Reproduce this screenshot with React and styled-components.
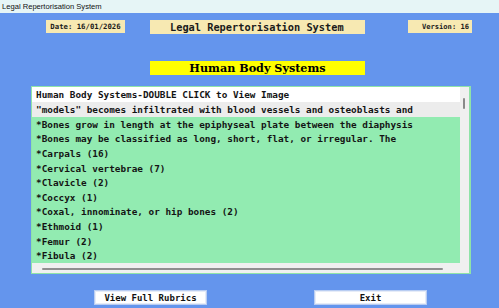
import styled, { createGlobalStyle } from "styled-components"

const GlobalStyle = createGlobalStyle`
    html, body {
        margin: 0;
        padding: 0;
        background: #6495ed;
    }
`

const Window = styled.div`
    width: 499px;
    height: 308px;
    background-color: #6495ed;
    display: flex;
    flex-direction: column;
    overflow: hidden;
`

const TitleBar = styled.div`
    height: 13px;
    background-color: #e6f5f6;
    display: flex;
    align-items: center;
    padding-left: 2px;
    font-family: "Liberation Sans", "Noto Sans", sans-serif;
    font-size: 7.6px;
    color: #111;
`

const TopRow = styled.div`
    display: flex;
    align-items: flex-start;
    margin-top: 7px;
    height: 14px;
`

const InfoBox = styled.div`
    margin-left: ${(p) => p.$left}px;
    width: ${(p) => p.$width}px;
    height: ${(p) => p.$height || 13}px;
    background-color: #f7e9b2;
    display: flex;
    align-items: center;
    justify-content: ${(p) => (p.$center ? "center" : "flex-start")};
    padding-left: ${(p) => p.$pad || 0}px;
    box-sizing: border-box;
    font-family: "DejaVu Sans Mono", "Liberation Mono", monospace;
    font-weight: bold;
    font-size: ${(p) => p.$size}px;
    color: #1a1a1a;
    white-space: nowrap;
`

const Heading = styled.div`
    margin-left: 150px;
    margin-top: 27px;
    width: 215px;
    height: 14px;
    background-color: #ffff00;
    display: flex;
    align-items: center;
    justify-content: center;
    font-family: "DejaVu Serif", "Liberation Serif", serif;
    font-weight: 900;
    font-size: 11.2px;
    color: #000;
`

const ListBox = styled.div`
    margin-left: 31px;
    margin-top: 11px;
    width: 440px;
    height: 188px;
    box-sizing: border-box;
    border: 1px solid #8fe3a8;
    border-right-width: 2px;
    background-color: #f0f0f0;
    display: grid;
    grid-template-columns: 1fr 9px;
    grid-template-rows: 1fr 10px;
`

const Rows = styled.div`
    display: flex;
    flex-direction: column;
    background-color: #92ebb1;
    overflow: hidden;
`

const Row = styled.div`
    height: ${(p) => p.$h}px;
    flex-shrink: 0;
    display: flex;
    align-items: center;
    padding-left: 4px;
    background-color: ${(p) => p.$bg || "transparent"};
    font-family: "DejaVu Sans Mono", "Liberation Mono", monospace;
    font-weight: bold;
    font-size: 9.35px;
    color: #141414;
    white-space: nowrap;
`

const VScroll = styled.div`
    background-color: #f0f0f0;
    position: relative;
    .thumb {
        position: absolute;
        left: 3px;
        top: 11px;
        width: 2px;
        height: 11px;
        border-radius: 1px;
        background-color: #8a8a8a;
    }
`

const HScroll = styled.div`
    background-color: #f0f0f0;
    display: flex;
    align-items: flex-end;
    padding: 0 0 3px 10px;
    .thumb {
        width: 401px;
        height: 2px;
        border-radius: 1px;
        background-color: #8f8f8f;
    }
`

const Corner = styled.div`
    background-color: #f0f0f0;
`

const ButtonRow = styled.div`
    display: flex;
    margin-top: 16px;
`

const Button = styled.button`
    margin-left: ${(p) => p.$left}px;
    width: 113px;
    height: 15px;
    padding: 0;
    background-color: #ffffff;
    border: 1px solid #b9cdf2;
    box-shadow: inset 0 0 0 1px #e6ecf8;
    font-family: "DejaVu Sans Mono", "Liberation Mono", monospace;
    font-weight: bold;
    font-size: 9px;
    color: #111;
`

const items = [
    "*Bones grow in length at the epiphyseal plate between the diaphysis",
    "*Bones may be classified as long, short, flat, or irregular. The",
    "*Carpals (16)",
    "*Cervical vertebrae (7)",
    "*Clavicle (2)",
    "*Coccyx (1)",
    "*Coxal, innominate, or hip bones (2)",
    "*Ethmoid (1)",
    "*Femur (2)",
    "*Fibula (2)",
]

function App() {
    return (
        <>
            <GlobalStyle />
            <Window>
                <TitleBar>Legal Repertorisation System</TitleBar>
                <TopRow>
                    <InfoBox $left={46} $width={79} $size={7.3} $center>Date: 16/01/2026</InfoBox>
                    <InfoBox $left={25} $width={215} $height={14} $size={10.3} $pad={20}>Legal Repertorisation System</InfoBox>
                    <InfoBox $left={43} $width={64} $size={7.1} $pad={14}>Version: 16</InfoBox>
                </TopRow>
                <Heading>Human Body Systems</Heading>
                <ListBox>
                    <Rows>
                        <Row $h={15} $bg="#ffffff">Human Body Systems-DOUBLE CLICK to View Image</Row>
                        <Row $h={15} $bg="#ececec">"models" becomes infiltrated with blood vessels and osteoblasts and</Row>
                        {items.map((item) => (
                            <Row key={item} $h={14.6}>{item}</Row>
                        ))}
                    </Rows>
                    <VScroll><div className="thumb" /></VScroll>
                    <HScroll><div className="thumb" /></HScroll>
                    <Corner />
                </ListBox>
                <ButtonRow>
                    <Button $left={94}>View Full Rubrics</Button>
                    <Button $left={107}>Exit</Button>
                </ButtonRow>
            </Window>
        </>
    )
}

export default App
